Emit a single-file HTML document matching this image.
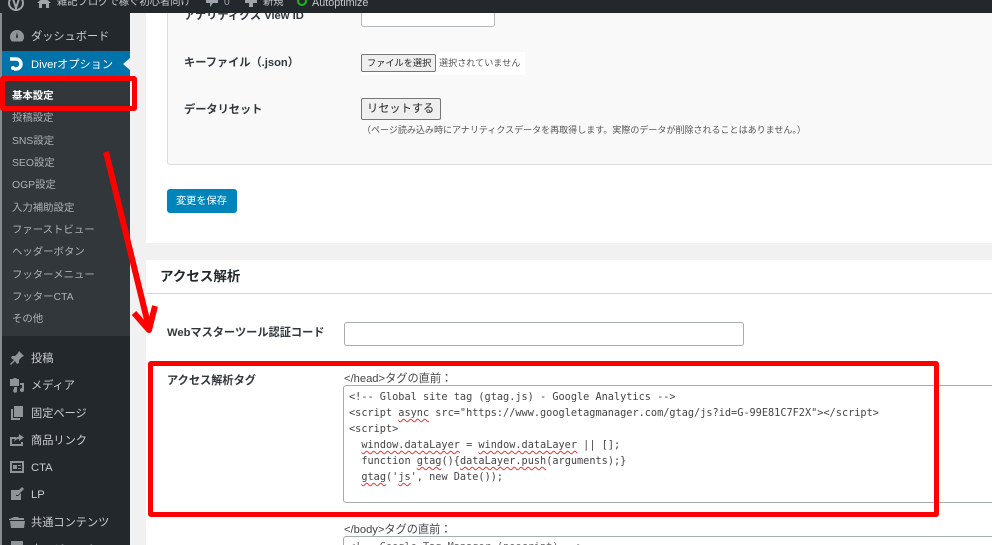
<!DOCTYPE html>
<html lang="ja">
<head>
<meta charset="utf-8">
<style>
html,body{margin:0;padding:0;width:992px;height:545px;overflow:hidden;background:#fff}
body{position:relative;font-family:"Liberation Sans","Noto Sans CJK JP",sans-serif;color:#23282d;filter:blur(.35px)}
.a{position:absolute;white-space:nowrap}
.r{position:absolute;box-sizing:border-box}
.m{position:absolute;left:31px;font-size:11.2px;line-height:16px;color:#c9cdd0;white-space:nowrap}
.s{position:absolute;left:12px;font-size:10.4px;line-height:14px;color:#adb1b5;white-space:nowrap}
.l{position:absolute;font-size:11.2px;font-weight:bold;line-height:16px;color:#32373c;white-space:nowrap}
.c{position:absolute;left:349px;font-family:"DejaVu Sans Mono","Liberation Mono",monospace;font-size:10.24px;line-height:16px;color:#444;white-space:pre}
.w{text-decoration:underline wavy #e33;text-decoration-thickness:1px;text-underline-offset:2px}
.t{position:absolute;top:-4px;font-size:10.3px;line-height:14px;color:#c5c9cc;white-space:nowrap}
svg.i{position:absolute;left:9px;width:16px;height:16px;fill:#8f9499}
</style>
</head>
<body>
<div class="r" style="left:130px;top:0;width:862px;height:545px;background:#f1f1f1"></div>
<div class="r" style="left:146px;top:0;width:846px;height:243px;background:#fff"></div>
<div class="r" style="left:146px;top:260px;width:846px;height:285px;background:#fff"></div>
<div class="r" style="left:167px;top:0;width:840px;height:165px;background:#f9f9f9;border:1px solid #dcdcdc;border-radius:3px"></div>

<!-- upper panel -->
<div class="l" style="left:184px;top:8px">アナリティクス View ID</div>
<div class="r" style="left:361px;top:4px;width:134px;height:23px;background:#fff;border:1px solid #b4b9be;border-radius:3px"></div>
<div class="l" style="left:184px;top:55px">キーファイル（.json）</div>
<div class="r" style="left:361px;top:52px;width:164px;height:23px;background:#fff"></div>
<div class="r" style="left:361px;top:54px;width:75px;height:18px;background:#efefef;border:1px solid #767676;border-radius:2px"></div>
<div class="a" style="left:367px;top:56px;font-size:9.2px;line-height:14px;color:#222">ファイルを選択</div>
<div class="a" style="left:439px;top:56px;font-size:9.1px;line-height:14px;color:#555">選択されていません</div>
<div class="l" style="left:184px;top:102px">データリセット</div>
<div class="r" style="left:361px;top:98px;width:80px;height:22px;background:#efefef;border:1px solid #767676;border-radius:2px"></div>
<div class="a" style="left:367px;top:101px;font-size:11.2px;line-height:16px;color:#222">リセットする</div>
<div class="a" style="left:362px;top:123px;font-size:9.03px;line-height:14px;color:#555">（ページ読み込み時にアナリティクスデータを再取得します。実際のデータが削除されることはありません。）</div>

<div class="r" style="left:167px;top:189px;width:70px;height:24px;background:#0085ba;border-radius:3px"></div>
<div class="a" style="left:176px;top:195px;font-size:10.2px;line-height:14px;color:#fff">変更を保存</div>

<!-- admin bar -->
<div class="r" style="left:0;top:0;width:992px;height:13px;background:#23282d"></div>
<svg style="position:absolute;left:8px;top:-5px;width:16px;height:16px"><circle cx="8" cy="8" r="7" fill="none" stroke="#a0a5aa" stroke-width="2"/><path d="M5 4l3 9 3-9" fill="none" stroke="#a0a5aa" stroke-width="2"/></svg>
<svg style="position:absolute;left:37px;top:-3px;width:14px;height:11px"><path d="M7 0L0 6h2v5h3V7h4v4h3V6h2z" fill="#a0a5aa"/></svg>
<div class="t" style="left:57px">雑記ブログで稼ぐ初心者向け</div>
<svg style="position:absolute;left:205px;top:-3px;width:14px;height:12px"><path d="M1 0h12v6H8l-3 4V6H1z" fill="#a0a5aa"/></svg>
<div class="t" style="left:224px;color:#a0a5aa">0</div>
<svg style="position:absolute;left:245px;top:-3px;width:12px;height:10px"><path d="M4 0h4v3h4v3H8v4H4V6H0V3h4z" fill="#a0a5aa"/></svg>
<div class="t" style="left:263px">新規</div>
<svg style="position:absolute;left:296px;top:-3px;width:12px;height:12px"><circle cx="6" cy="4" r="4" fill="none" stroke="#22b322" stroke-width="2"/></svg>
<div class="t" style="left:312px;font-size:10.8px">Autoptimize</div>

<!-- sidebar -->
<div class="r" style="left:0;top:13px;width:2px;height:532px;background:#8a8d90"></div>
<div class="r" style="left:2px;top:13px;width:128px;height:532px;background:#23282d"></div>
<div class="r" style="left:2px;top:51px;width:128px;height:25px;background:#0073aa"></div>
<div class="r" style="left:2px;top:76px;width:128px;height:260px;background:#32373c"></div>
<div class="r" style="left:123px;top:58px;width:0;height:0;border:6px solid transparent;border-left:0;border-right:7px solid #f1f1f1"></div>

<svg class="i" style="top:28px" viewBox="0 0 16 16"><path d="M8 2a7 7 0 0 0-7 7c0 2 .8 3.500 2 4.500h10c1.200-1 2-2.500 2-4.500a7 7 0 0 0-7-7zm0 2l1 5-1 1.500L7 9z"/></svg>
<div class="m" style="top:29px">ダッシュボード</div>
<svg style="position:absolute;left:9px;top:57px;width:15px;height:15px"><path d="M1 2h6a5 5 0 0 1 0 10H5" fill="none" stroke="#fff" stroke-width="3.500"/><circle cx="4" cy="11" r="2" fill="#fff"/></svg>
<div class="m" style="top:57px;color:#fff">Diverオプション</div>

<div class="s" style="top:90px;color:#fff;font-weight:bold">基本設定</div>
<div class="s" style="top:112px">投稿設定</div>
<div class="s" style="top:135px">SNS設定</div>
<div class="s" style="top:157px">SEO設定</div>
<div class="s" style="top:179px">OGP設定</div>
<div class="s" style="top:202px">入力補助設定</div>
<div class="s" style="top:224px">ファーストビュー</div>
<div class="s" style="top:246px">ヘッダーボタン</div>
<div class="s" style="top:269px">フッターメニュー</div>
<div class="s" style="top:291px">フッターCTA</div>
<div class="s" style="top:313px">その他</div>

<svg class="i" style="top:350px" viewBox="0 0 16 16"><path d="M10 1l5 5-2 1-3 3 0 3-2 1-2-3-4 4-1-1 4-4-3-2 1-2h3l3-3z"/></svg>
<div class="m" style="top:351px">投稿</div>
<svg class="i" style="top:377px" viewBox="0 0 16 16"><path d="M1 2h3l1-1h2l1 1h2v7H1zM11 6h4v7a2 2 0 1 1-2-2V8h-2zM5 10h3v3a2 2 0 1 1-3-1z"/></svg>
<div class="m" style="top:378px">メディア</div>
<svg class="i" style="top:405px" viewBox="0 0 16 16"><path d="M5 1h9v11H5zM2 4h2v9h7v2H2z"/></svg>
<div class="m" style="top:406px">固定ページ</div>
<svg class="i" style="top:432px" viewBox="0 0 16 16"><path d="M1 5h6v2H3v5h9v-2h2v4H1zM10 2l5 3.500-5 3.500V7C8 7 6 8 5 10c0-3 2-5 5-5.500z"/></svg>
<div class="m" style="top:433px">商品リンク</div>
<svg class="i" style="top:459px" viewBox="0 0 16 16"><path fill-rule="evenodd" d="M1 2h14v12H1zM3 4v8h10V4zM4 6h4v4H4zM9 6h3v1H9zM9 9h3v1H9z"/></svg>
<div class="m" style="top:460px">CTA</div>
<svg class="i" style="top:486px" viewBox="0 0 16 16"><path d="M2 4h8L7 8v2h2l3-3v7H2zM13 1l2 2-6 6H7V7z"/></svg>
<div class="m" style="top:487px">LP</div>
<svg class="i" style="top:514px" viewBox="0 0 16 16"><path d="M0 5l3-1 2-1h4l1 1 5 0v2H0zM1 7h15l-1 7H2z"/></svg>
<div class="m" style="top:515px">共通コンテンツ</div>
<svg class="i" style="top:541px" viewBox="0 0 16 16"><path d="M2 0h12v16H2z"/></svg>
<div class="m" style="top:542px">ウィジェット</div>

<!-- access section -->
<div class="a" style="left:160px;top:267px;font-size:13.5px;font-weight:bold;line-height:20px;color:#23282d">アクセス解析</div>
<div class="r" style="left:146px;top:293px;width:846px;height:1px;background:#d8d8d8"></div>
<div class="l" style="left:167px;top:325px">Webマスターツール認証コード</div>
<div class="r" style="left:344px;top:322px;width:400px;height:24px;background:#fff;border:1px solid #a8acb0;border-radius:3px"></div>

<div class="l" style="left:167px;top:373px">アクセス解析タグ</div>
<div class="a" style="left:344px;top:371px;font-size:11.2px;line-height:16px;color:#444">&lt;/head&gt;タグの直前：</div>
<div class="r" style="left:343px;top:385px;width:660px;height:118px;background:#fff;border:1px solid #a8acb0;border-radius:3px"></div>
<div class="c" style="top:389px">&lt;!-- Global site tag (gtag.js) - Google Analytics --&gt;</div>
<div class="c" style="top:405px">&lt;script <span class="w">async</span> src="https://www.googletagmanager.com/gtag/js?id=G-99E81C7F2X"&gt;&lt;/script&gt;</div>
<div class="c" style="top:421px">&lt;script&gt;</div>
<div class="c" style="top:437px">  <span class="w">window.dataLayer</span> = <span class="w">window.dataLayer</span> || [];</div>
<div class="c" style="top:453px">  function <span class="w">gtag</span>(){<span class="w">dataLayer.push</span>(arguments);}</div>
<div class="c" style="top:469px">  <span class="w">gtag</span>('<span class="w">js</span>', new Date());</div>

<div class="a" style="left:344px;top:522px;font-size:11.2px;line-height:16px;color:#444">&lt;/body&gt;タグの直前：</div>
<div class="r" style="left:343px;top:536px;width:660px;height:30px;background:#fff;border:1px solid #a8acb0;border-radius:3px"></div>
<div class="c" style="top:539px;color:#666">&lt;!-- Google Tag Manager (noscript) --&gt;</div>

<!-- red annotations -->
<div class="r" style="left:0;top:76px;width:137px;height:35px;border:5px solid #f00;border-radius:3px"></div>
<div class="r" style="left:148px;top:361px;width:791px;height:156px;border:5px solid #f00;border-radius:3px"></div>
<svg style="position:absolute;left:0;top:0;width:992px;height:545px;pointer-events:none">
<path d="M106 152L149 328" fill="none" stroke="#f00" stroke-width="6"/>
<path d="M134 313L149 330L155 306" fill="none" stroke="#f00" stroke-width="6" stroke-linejoin="round"/>
</svg>
</body>
</html>
